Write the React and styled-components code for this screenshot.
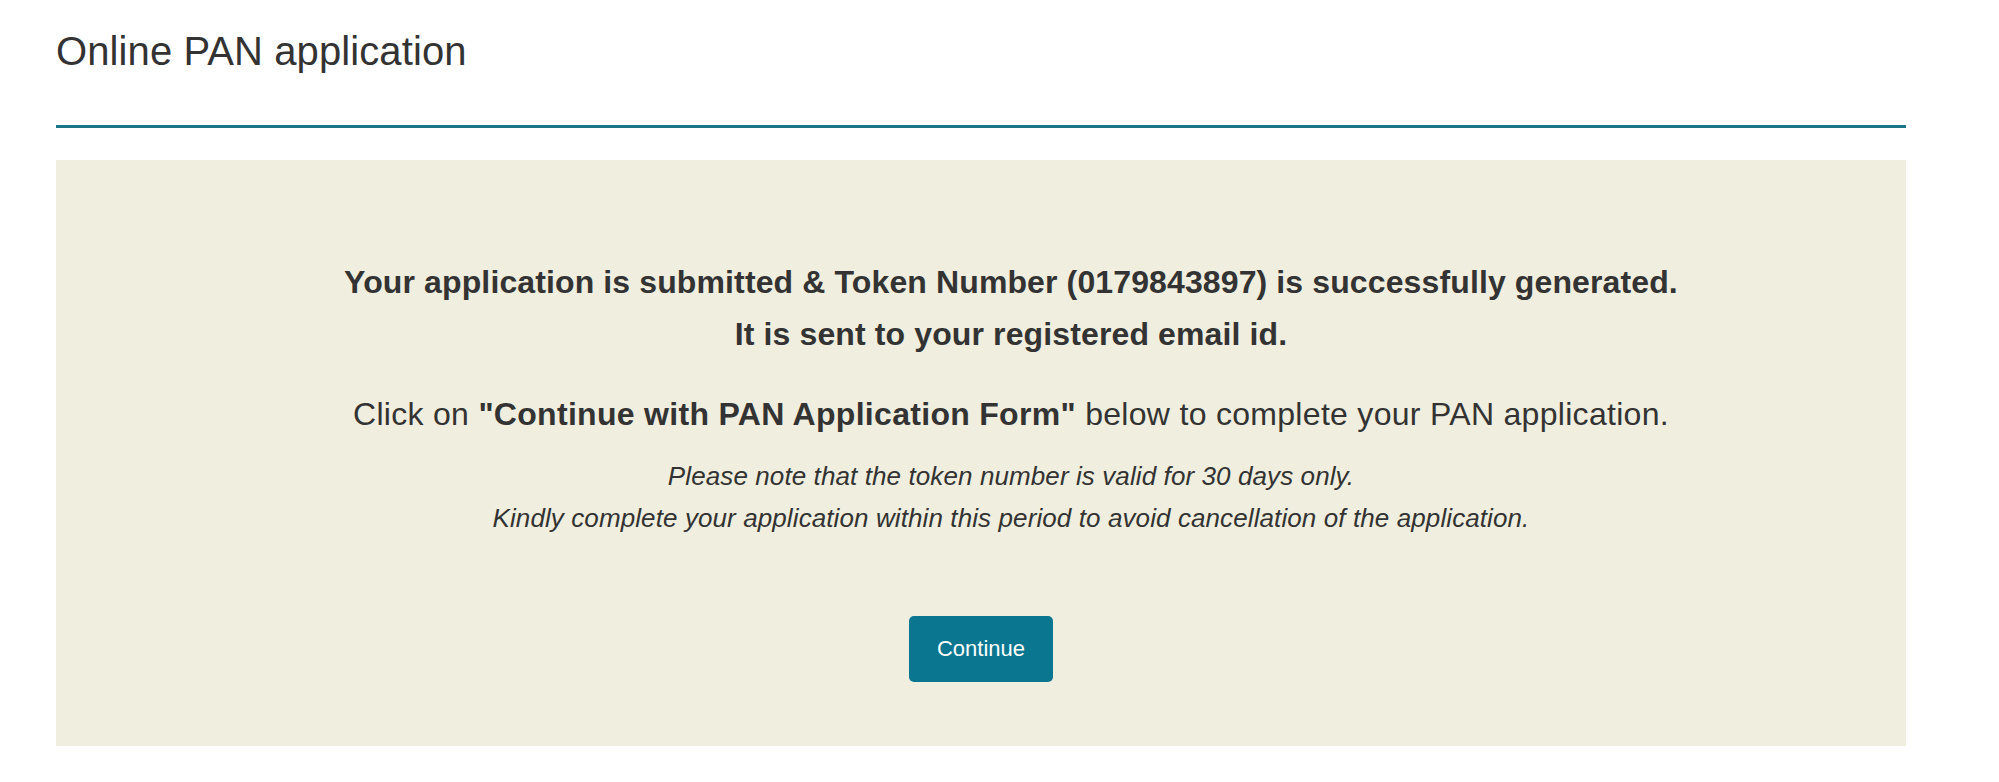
import React from "react";
import styled, { createGlobalStyle } from "styled-components";

const GlobalStyle = createGlobalStyle`
  html, body {
    margin: 0;
    padding: 0;
    background: #ffffff;
  }
  body {
    font-family: "Liberation Sans", Arial, Helvetica, sans-serif;
    color: #333333;
  }
`;

const Page = styled.main`
  width: 1850px;
  padding: 27px 0 0 56px;
`;

const Header = styled.header`
  padding-bottom: 50px;
  border-bottom: 3px solid #1b7689;
`;

const Title = styled.h1`
  margin: 0;
  font-size: 40px;
  line-height: 48px;
  font-weight: 400;
  color: #333333;
  letter-spacing: 0.1px;
`;

const Panel = styled.section`
  margin-top: 32px;
  background: #f0eede;
  height: 586px;
  box-sizing: border-box;
  padding: 96px 40px 64px;
  display: flex;
  flex-direction: column;
  align-items: center;
`;

const TextBlock = styled.div`
  align-self: stretch;
  padding-left: 60px;
  text-align: center;
`;

const Message = styled.p`
  margin: ${(p) => p.$mt || 0}px 0 0;
  font-size: ${(p) => p.$size}px;
  line-height: ${(p) => p.$lh}px;
  font-weight: ${(p) => (p.$bold ? 700 : 400)};
  font-style: ${(p) => (p.$italic ? "italic" : "normal")};
  letter-spacing: ${(p) => p.$ls || 0}px;
  color: #333333;
`;

const Strong = styled.strong`
  font-weight: 700;
`;

const Button = styled.button`
  margin-top: 77px;
  width: 144px;
  height: 66px;
  border: none;
  border-radius: 5px;
  background: #0b7690;
  color: #ffffff;
  font-family: "Liberation Sans", Arial, Helvetica, sans-serif;
  font-size: 22px;
  cursor: pointer;
`;

export default function App() {
  return (
    <>
      <GlobalStyle />
      <Page>
        <Header>
          <Title>Online PAN application</Title>
        </Header>
        <Panel>
          <TextBlock>
            <Message $size={32} $lh={52} $ls={0.12} $bold>
              Your application is submitted &amp; Token Number (0179843897) is successfully generated.
              <br />
              It is sent to your registered email id.
            </Message>
            <Message $size={32} $lh={52} $ls={0.3} $mt={28}>
              Click on <Strong>"Continue with PAN Application Form"</Strong> below to complete your PAN application.
            </Message>
            <Message $size={26} $lh={42} $ls={0.1} $mt={15} $italic>
              Please note that the token number is valid for 30 days only.
              <br />
              Kindly complete your application within this period to avoid cancellation of the application.
            </Message>
          </TextBlock>
          <Button type="button">Continue</Button>
        </Panel>
      </Page>
    </>
  );
}
